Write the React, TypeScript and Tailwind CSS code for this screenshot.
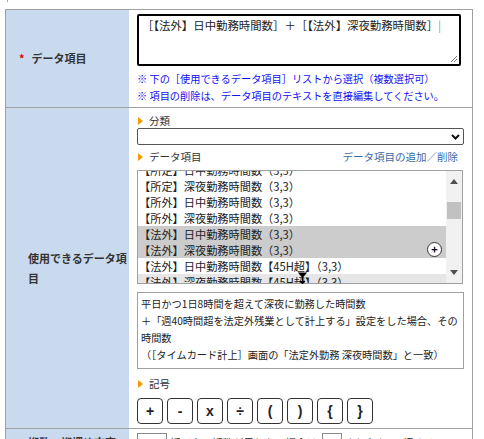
const jp = "font-['Noto_Sans_CJK_JP','Noto_Sans',sans-serif]";

const items = [
  "【所定】日中勤務時間数（3,3）",
  "【所定】深夜勤務時間数（3,3）",
  "【所外】日中勤務時間数（3,3）",
  "【所外】深夜勤務時間数（3,3）",
  "【法外】日中勤務時間数（3,3）",
  "【法外】深夜勤務時間数（3,3）",
  "【法外】日中勤務時間数【45H超】（3,3）",
  "【法外】深夜勤務時間数【45H超】（3,3）",
];

const symbols = ["+", "-", "x", "÷", "(", ")", "{", "}"];

function Bullet({ children }: { children: React.ReactNode }) {
  return (
    <div className="flex h-[14px] items-center gap-[6px] pl-[1px] text-[10.5px] leading-[14px] text-[#333]">
      <svg width="5" height="8" viewBox="0 0 5 8">
        <path d="M0 0 L5 4 L0 8 Z" fill="#f59a00" />
      </svg>
      <span>{children}</span>
    </div>
  );
}

function ListRow({ text, index }: { text: string; index: number }) {
  const bg =
    index === 4 || index === 5 ? "bg-[#cccccc]" : index === 7 ? "bg-[#e6e6e6]" : "bg-white";
  return (
    <div className={`h-[16px] whitespace-nowrap pl-[1px] text-[11.2px] leading-[16px] text-[#222] ${bg}`}>
      {text}
    </div>
  );
}

export default function App() {
  return (
    <div className={`${jp} w-[484px] bg-white`}>
      <div className="h-[9px] pl-[7px]">
        <div className="h-[2px] w-[1px] bg-[#f59a00]" />
      </div>

      <div className="ml-[5px] w-[468px] border-x border-t border-[#a0a0a0]">
        {/* row 1 */}
        <div className="grid grid-cols-[123px_1fr] border-b border-[#a0a0a0]">
          <div className="flex items-center bg-[#c9daef] pl-[13px] text-[11px] font-bold text-[#333]">
            <span className="text-[#e60000]">*</span>
            <span className="ml-[7px]">データ項目</span>
          </div>
          <div className="pb-[3px] pl-[8px] pt-[4px]">
            <div className="relative h-[52px] w-[324px] rounded-[2px] border-2 border-black px-[3px] pt-[1px]">
              <div className="whitespace-nowrap text-[11.4px] leading-[16px] text-[#222]">
                ［【法外】日中勤務時間数］＋［【法外】深夜勤務時間数］<span className="font-thin">|</span>
              </div>
              <svg className="absolute bottom-[1px] right-[1px]" width="8" height="8" viewBox="0 0 8 8">
                <path d="M7 1 L1 7 M7 4 L4 7" stroke="#777" strokeWidth="1" />
              </svg>
            </div>
            <div className="mt-[4px] text-[10.2px] leading-[17px] text-[#1010f0]">
              <div className="whitespace-nowrap">※ 下の［使用できるデータ項目］リストから選択（複数選択可）</div>
              <div className="whitespace-nowrap">※ 項目の削除は、データ項目のテキストを直接編集してください。</div>
            </div>
          </div>
        </div>

        {/* row 2 */}
        <div className="grid grid-cols-[123px_1fr] border-b border-[#a0a0a0]">
          <div className="flex items-center bg-[#c9daef] pl-[22px] text-[11px] font-bold leading-[20px] text-[#333]">
            <span>
              使用できるデータ項
              <br />目
            </span>
          </div>
          <div className="pb-[4px] pl-[8px] pr-[9px] pt-[6px]">
            <Bullet>分類</Bullet>
            <div className="flex h-[17px] w-[327px] items-center justify-end rounded-[2px] border border-[#555] pr-[3px]">
              <svg width="9" height="6" viewBox="0 0 9 6">
                <path d="M1 1 L4.5 4.5 L8 1" fill="none" stroke="#111" strokeWidth="2" />
              </svg>
            </div>

            <div className="mt-[5px] flex w-[321px] items-center justify-between">
              <Bullet>データ項目</Bullet>
              <span className="text-[10.5px] leading-[14px] text-[#3a6aa5]">データ項目の追加／削除</span>
            </div>

            <div className="relative mt-[6px] flex h-[114px] w-[326px] border border-[#a0a0a0]">
              <div className="flex-1 overflow-hidden">
                <div className="-mt-[9px]">
                  {items.map((t, i) => (
                    <ListRow key={i} text={t} index={i} />
                  ))}
                </div>
              </div>
              <div className="flex w-[16px] flex-col items-center bg-[#f1f1f1]">
                <svg className="mt-[8px]" width="8" height="5" viewBox="0 0 8 5">
                  <path d="M0 5 L4 0 L8 5 Z" fill="#505050" />
                </svg>
                <div className="mt-[18px] h-[17px] w-[14px] bg-[#c1c1c1]" />
                <div className="flex-1" />
                <svg className="mb-[8px]" width="8" height="5" viewBox="0 0 8 5">
                  <path d="M0 0 L4 5 L8 0 Z" fill="#505050" />
                </svg>
              </div>
              <div className="absolute left-[289px] top-[71px] flex h-[15px] w-[15px] items-center justify-center rounded-full border border-[#333] bg-white text-[11px] font-bold leading-none text-black">
                +
              </div>
              <svg className="absolute left-[160px] top-[101px]" width="9" height="12" viewBox="0 0 9 12">
                <path d="M1 1 L8 1 L4.5 5 Z M4.5 5 L4.5 11 M2 9 L4.5 11.5 L7 9" fill="#000" stroke="#000" strokeWidth="1.2" />
              </svg>
            </div>

            <div className="mt-[8px] h-[77px] w-[327px] border border-[#a0a0a0] pl-[3px] pt-[2px] text-[10.2px] leading-[17px] text-[#222]">
              <div className="whitespace-nowrap">平日かつ1日8時間を超えて深夜に勤務した時間数</div>
              <div className="whitespace-nowrap">＋「週40時間超を法定外残業として計上する」設定をした場合、その</div>
              <div className="whitespace-nowrap">時間数</div>
              <div className="whitespace-nowrap">（［タイムカード計上］画面の「法定外勤務 深夜時間数」と一致）</div>
            </div>

            <div className="mt-[8px]">
              <Bullet>記号</Bullet>
            </div>
            <div className="mt-[7px] flex gap-[4px]">
              {symbols.map((s) => (
                <button
                  key={s}
                  className="flex h-[26px] w-[26px] items-center justify-center rounded-[4px] border border-[#333] bg-white font-['Liberation_Sans',sans-serif] text-[14px] font-bold text-[#222]"
                >
                  {s}
                </button>
              ))}
            </div>
          </div>
        </div>

        {/* row 3 */}
        <div className="grid grid-cols-[123px_1fr]">
          <div className="bg-[#c9daef] pl-[22px] pt-[6px] text-[11px] font-bold leading-[14px] text-[#333]">
            桁数・桁埋め文字
          </div>
          <div className="flex items-center gap-[3px] pl-[8px] pt-[4px] text-[10.5px] text-[#222]">
            <div className="h-[20px] w-[30px] border border-[#888]" />
            <span className="whitespace-nowrap">桁以上、桁数が足りない場合は</span>
            <div className="ml-[2px] h-[20px] w-[20px] border border-[#888]" />
            <span className="whitespace-nowrap">より左を0で埋める</span>
          </div>
        </div>
      </div>
    </div>
  );
}
